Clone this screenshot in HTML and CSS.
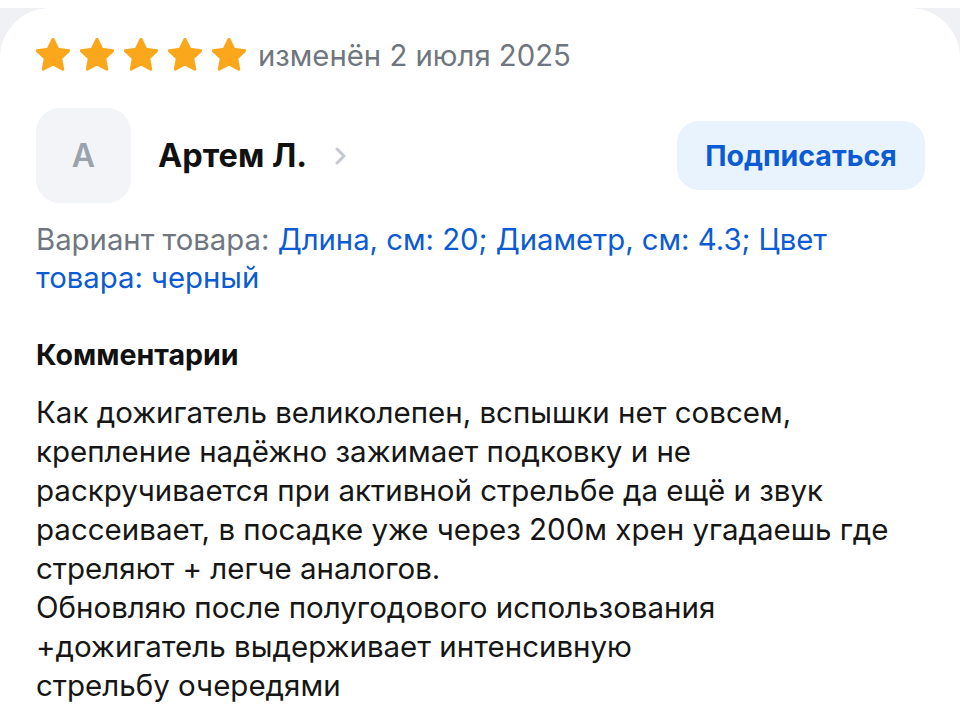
FILE: index.html
```html
<!doctype html>
<html>
<head>
<meta charset="utf-8">
<title>Отзыв</title>
<link rel="stylesheet" href="styles.css">
</head>
<body>
<div class="review">
	<div class="rating">
		<div class="stars">
			<svg class="star" viewBox="2.6 2.2 18.8 18.8"><path d="M12 2.8l2.7 5.6 6.1.8-4.5 4.2 1.1 6.1L12 16.6l-5.4 2.9 1.1-6.1-4.5-4.2 6.1-.8z"/></svg>
			<svg class="star" viewBox="2.6 2.2 18.8 18.8"><path d="M12 2.8l2.7 5.6 6.1.8-4.5 4.2 1.1 6.1L12 16.6l-5.4 2.9 1.1-6.1-4.5-4.2 6.1-.8z"/></svg>
			<svg class="star" viewBox="2.6 2.2 18.8 18.8"><path d="M12 2.8l2.7 5.6 6.1.8-4.5 4.2 1.1 6.1L12 16.6l-5.4 2.9 1.1-6.1-4.5-4.2 6.1-.8z"/></svg>
			<svg class="star" viewBox="2.6 2.2 18.8 18.8"><path d="M12 2.8l2.7 5.6 6.1.8-4.5 4.2 1.1 6.1L12 16.6l-5.4 2.9 1.1-6.1-4.5-4.2 6.1-.8z"/></svg>
			<svg class="star" viewBox="2.6 2.2 18.8 18.8"><path d="M12 2.8l2.7 5.6 6.1.8-4.5 4.2 1.1 6.1L12 16.6l-5.4 2.9 1.1-6.1-4.5-4.2 6.1-.8z"/></svg>
		</div>
		<span class="date">изменён 2 июля 2025</span>
	</div>

	<div class="author">
		<div class="avatar">А</div>
		<a class="name" href="#">Артем Л.
			<svg class="chevron" viewBox="0 0 12 20"><path d="M3 3l7 7-7 7"/></svg>
		</a>
		<button class="subscribe">Подписаться</button>
	</div>

	<p class="variant">Вариант товара: <span class="link">Длина, см: 20; Диаметр, см: 4.3; Цвет товара: черный</span></p>

	<h3 class="title">Комментарии</h3>
	<p class="text">Как дожигатель великолепен, вспышки нет совсем,<br>
	крепление надёжно зажимает подковку и не<br>
	раскручивается при активной стрельбе да ещё и звук<br>
	рассеивает, в посадке уже через 200м хрен угадаешь где<br>
	стреляют + легче аналогов.<br>
	Обновляю после полугодового использования<br>
	+дожигатель выдерживает интенсивную<br>
	стрельбу очередями</p>
</div>
</body>
</html>
```

FILE: styles.css
```css
*{margin:0;padding:0;box-sizing:border-box}
body{background:linear-gradient(#fff 0,#fff 8px,#eff1f5 8px,#eff1f5 70px,#fff 70px);font-family:Inter,"Noto Sans",sans-serif;color:#141414}
.review{background:#fff;margin-top:8px;border-radius:50px 50px 0 0;padding:30px 35px 0 36px;min-height:712px}
.rating{display:flex;align-items:center;height:34px}
.stars{display:flex;gap:10px}
.star{width:34px;height:34px;display:block}
.star path{fill:#fba71b;stroke:#fba71b;stroke-width:1.6;stroke-linejoin:round}
.date{margin-left:12px;font-size:29.3px;color:#6f7680}
.author{display:flex;align-items:center;margin-top:36px}
.avatar{width:95px;height:95px;border-radius:24px;background:#f2f4f8;color:#9aa3ad;font-size:32px;font-weight:600;display:flex;align-items:center;justify-content:center}
.name{display:flex;align-items:center;margin-left:27px;font-size:32.5px;font-weight:700;color:#111;text-decoration:none}
.chevron{width:12px;height:20px;margin-left:27px}
.chevron path{fill:none;stroke:#c4c8cf;stroke-width:3;stroke-linecap:round;stroke-linejoin:round}
.subscribe{margin-left:auto;margin-right:0;width:248px;height:69px;border:0;border-radius:22px;background:#e8f3fd;color:#0b5bd5;font:700 28.5px Inter,"Noto Sans",sans-serif}
.variant{margin-top:18px;font-size:29.3px;line-height:38px;color:#6f7680;padding-right:40px}
.link{color:#0b5bd5}
.title{margin-top:40px;font-size:28.6px;font-weight:700;line-height:36px;color:#111}
.text{margin-top:20px;font-size:29.5px;line-height:39px;color:#161616}
```
